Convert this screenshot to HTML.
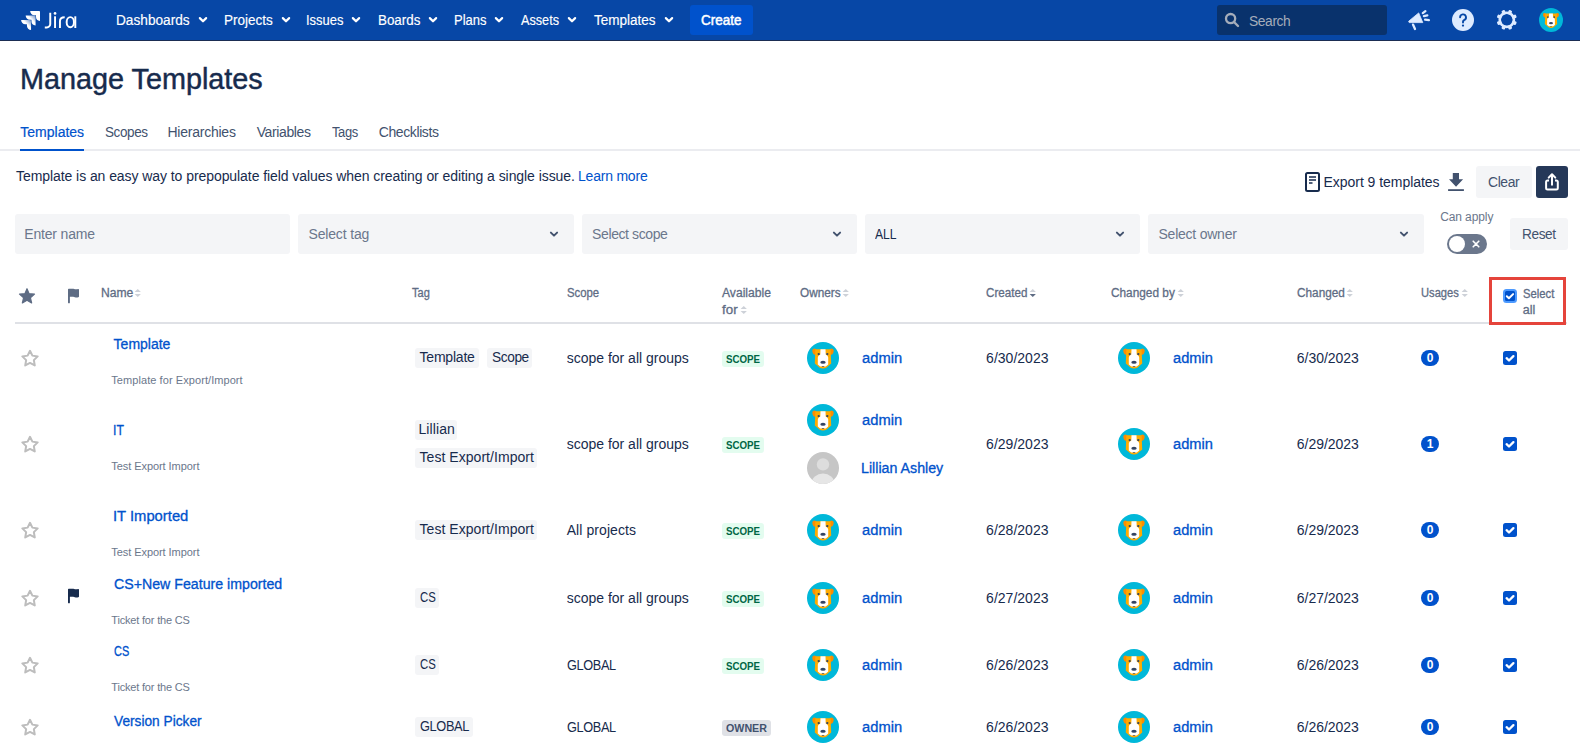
<!DOCTYPE html>
<html><head><meta charset="utf-8"><title>Manage Templates</title>
<style>
html,body{margin:0;padding:0;background:#fff;width:1580px;height:752px;overflow:hidden;position:relative;font-family:"Liberation Sans",sans-serif}
.b{position:absolute;box-sizing:border-box;display:block}
.t{position:absolute;white-space:nowrap;line-height:normal;transform-origin:0 0;font-family:"Liberation Sans",sans-serif}
</style></head><body>
<div class="b" style="left:0px;top:0px;width:1580px;height:40px;background:#0747A6;border-radius:0px;"></div>
<div class="b" style="left:0px;top:40px;width:1580px;height:1px;background:#1B2D52;border-radius:0px;"></div>
<div class="b" style="left:690px;top:5px;width:63px;height:30px;background:#0052CC;border-radius:3px;"></div>
<div class="b" style="left:1217px;top:5px;width:170px;height:30px;background:#09326C;border-radius:3px;"></div>
<div class="b" style="left:0px;top:149px;width:1580px;height:2px;background:#EBECF0;border-radius:0px;"></div>
<div class="b" style="left:20px;top:149px;width:64px;height:2px;background:#0052CC;border-radius:0px;"></div>
<div class="b" style="left:1476px;top:166px;width:56px;height:32px;background:#F4F5F7;border-radius:3px;"></div>
<div class="b" style="left:1536px;top:166px;width:32px;height:32px;background:#253858;border-radius:3px;"></div>
<div class="b" style="left:15px;top:214px;width:275px;height:40px;background:#F4F5F7;border-radius:3px;"></div>
<div class="b" style="left:298px;top:214px;width:276px;height:40px;background:#F4F5F7;border-radius:3px;"></div>
<div class="b" style="left:582px;top:214px;width:275px;height:40px;background:#F4F5F7;border-radius:3px;"></div>
<div class="b" style="left:865px;top:214px;width:275px;height:40px;background:#F4F5F7;border-radius:3px;"></div>
<div class="b" style="left:1148px;top:214px;width:276px;height:40px;background:#F4F5F7;border-radius:3px;"></div>
<div class="b" style="left:1447px;top:234px;width:40px;height:20px;background:#6B778C;border-radius:10px;"></div>
<div class="b" style="left:1449px;top:236px;width:16px;height:16px;background:#fff;border-radius:8px;"></div>
<div class="b" style="left:1510px;top:218px;width:58px;height:32px;background:#F4F5F7;border-radius:3px;"></div>
<div class="b" style="left:15px;top:322px;width:1552px;height:2px;background:#DFE1E6;border-radius:0px;"></div>
<div class="b" style="left:415px;top:348px;width:64px;height:20px;background:#F4F5F7;border-radius:3px;"></div>
<div class="b" style="left:487.1px;top:348px;width:45px;height:20px;background:#F4F5F7;border-radius:3px;"></div>
<div class="b" style="left:722px;top:351px;width:42px;height:16px;background:#E3FCEF;border-radius:3px;"></div>
<div class="b" style="left:1421px;top:350px;width:18px;height:16px;background:#0052CC;border-radius:8px;"></div>
<div class="b" style="left:415px;top:420px;width:42px;height:20px;background:#F4F5F7;border-radius:3px;"></div>
<div class="b" style="left:415px;top:448px;width:122px;height:20px;background:#F4F5F7;border-radius:3px;"></div>
<div class="b" style="left:722px;top:437px;width:42px;height:16px;background:#E3FCEF;border-radius:3px;"></div>
<svg class="b" style="left:807px;top:452px" width="32" height="32" viewBox="0 0 32 32"><defs><clipPath id="cp"><circle cx="16" cy="16" r="16"/></clipPath></defs><g clip-path="url(#cp)"><rect width="32" height="32" fill="#C6C6C6"/><circle cx="16" cy="12.4" r="6.2" fill="#DDDDDD"/><ellipse cx="16" cy="31.5" rx="11.5" ry="10" fill="#E6E6E6"/></g></svg>
<div class="b" style="left:1421px;top:436px;width:18px;height:16px;background:#0052CC;border-radius:8px;"></div>
<div class="b" style="left:415px;top:520px;width:122px;height:20px;background:#F4F5F7;border-radius:3px;"></div>
<div class="b" style="left:722px;top:523px;width:42px;height:16px;background:#E3FCEF;border-radius:3px;"></div>
<div class="b" style="left:1421px;top:522px;width:18px;height:16px;background:#0052CC;border-radius:8px;"></div>
<div class="b" style="left:415px;top:588px;width:24px;height:20px;background:#F4F5F7;border-radius:3px;"></div>
<div class="b" style="left:722px;top:591px;width:42px;height:16px;background:#E3FCEF;border-radius:3px;"></div>
<div class="b" style="left:1421px;top:590px;width:18px;height:16px;background:#0052CC;border-radius:8px;"></div>
<div class="b" style="left:415px;top:655px;width:24px;height:20px;background:#F4F5F7;border-radius:3px;"></div>
<div class="b" style="left:722px;top:658px;width:42px;height:16px;background:#E3FCEF;border-radius:3px;"></div>
<div class="b" style="left:1421px;top:657px;width:18px;height:16px;background:#0052CC;border-radius:8px;"></div>
<div class="b" style="left:415px;top:717px;width:58px;height:20px;background:#F4F5F7;border-radius:3px;"></div>
<div class="b" style="left:722px;top:720px;width:49px;height:16px;background:#DFE1E6;border-radius:3px;"></div>
<div class="b" style="left:1421px;top:719px;width:18px;height:16px;background:#0052CC;border-radius:8px;"></div>
<svg class="b" style="left:21px;top:11px" width="19" height="19" viewBox="0 0 19 19"><defs>
<linearGradient id="jg1" x1="98%" y1="0%" x2="58%" y2="40%"><stop offset="0" stop-color="#fff" stop-opacity=".4"/><stop offset="1" stop-color="#fff"/></linearGradient>
</defs>
<g transform="scale(0.826)">
<path fill="#fff" d="M22.16 0H11.11a5 5 0 0 0 5 5h2.03v1.97a5 5 0 0 0 5 4.99V1.84A1.84 1.84 0 0 0 22.16 0z"/>
<path fill="url(#jg1)" d="M16.68 5.5H5.63a5 5 0 0 0 5 5h2.03v1.97a5 5 0 0 0 5 4.98V6.48a.98.98 0 0 0-.98-.98z"/>
<path fill="url(#jg1)" d="M11.19 11H.14a5 5 0 0 0 5 5h2.04v1.97A5 5 0 0 0 12.16 23V11.98a.98.98 0 0 0-.97-.98z"/>
</g></svg>
<svg class="b" style="left:44px;top:10px" width="34" height="20" viewBox="0 0 34 20"><g fill="none" stroke="#fff" stroke-width="1.95">
<path d="M6.25 2.8V13.9a3.5 3.5 0 0 1-3.5 3.5H0.8"/>
<path d="M11.05 6.3V18"/>
<path d="M15.95 18V11.2Q15.95 7.25 20.7 7.25"/>
<ellipse cx="26.3" cy="12.2" rx="3.65" ry="5.1"/>
<path d="M31.3 6.3V18"/>
</g><circle cx="11.05" cy="3.4" r="1.35" fill="#fff"/></svg>
<svg class="b" style="left:198px;top:16px" width="10" height="8" viewBox="0 0 10 8"><path d="M1.85 2.1L5 5.25 8.15 2.1" fill="none" stroke="#fff" stroke-width="2.2" stroke-linecap="round" stroke-linejoin="round"/></svg>
<svg class="b" style="left:281px;top:16px" width="10" height="8" viewBox="0 0 10 8"><path d="M1.85 2.1L5 5.25 8.15 2.1" fill="none" stroke="#fff" stroke-width="2.2" stroke-linecap="round" stroke-linejoin="round"/></svg>
<svg class="b" style="left:351px;top:16px" width="10" height="8" viewBox="0 0 10 8"><path d="M1.85 2.1L5 5.25 8.15 2.1" fill="none" stroke="#fff" stroke-width="2.2" stroke-linecap="round" stroke-linejoin="round"/></svg>
<svg class="b" style="left:428px;top:16px" width="10" height="8" viewBox="0 0 10 8"><path d="M1.85 2.1L5 5.25 8.15 2.1" fill="none" stroke="#fff" stroke-width="2.2" stroke-linecap="round" stroke-linejoin="round"/></svg>
<svg class="b" style="left:494px;top:16px" width="10" height="8" viewBox="0 0 10 8"><path d="M1.85 2.1L5 5.25 8.15 2.1" fill="none" stroke="#fff" stroke-width="2.2" stroke-linecap="round" stroke-linejoin="round"/></svg>
<svg class="b" style="left:567px;top:16px" width="10" height="8" viewBox="0 0 10 8"><path d="M1.85 2.1L5 5.25 8.15 2.1" fill="none" stroke="#fff" stroke-width="2.2" stroke-linecap="round" stroke-linejoin="round"/></svg>
<svg class="b" style="left:664px;top:16px" width="10" height="8" viewBox="0 0 10 8"><path d="M1.85 2.1L5 5.25 8.15 2.1" fill="none" stroke="#fff" stroke-width="2.2" stroke-linecap="round" stroke-linejoin="round"/></svg>
<svg class="b" style="left:1224px;top:12px" width="16" height="16" viewBox="0 0 16 16"><circle cx="6.6" cy="6.6" r="4.6" fill="none" stroke="#A5ADBA" stroke-width="2.3"/><path d="M10 10l4 4" stroke="#A5ADBA" stroke-width="2.4" stroke-linecap="round"/></svg>
<svg class="b" style="left:1406px;top:8px" width="26" height="24" viewBox="0 0 26 24"><path fill="#DEEBFF" stroke="#DEEBFF" stroke-width=".8" stroke-linejoin="round" d="M2.6 13.3L12.7 4.9 16.8 14.6H3.2z"/>
<g stroke="#DEEBFF" stroke-width="2.3" stroke-linecap="round" fill="none">
<path d="M7 16.6l2 4.4"/><path d="M16.8 5.1l2.6-2"/><path d="M17.9 8.1l3.4-.8"/><path d="M19.1 11.7l3.8.4"/></g></svg>
<svg class="b" style="left:1452px;top:9px" width="22" height="22" viewBox="0 0 22 22"><circle cx="11" cy="11" r="11" fill="#DEEBFF"/><path d="M8.1 8.3a2.95 2.95 0 1 1 4 2.8c-.7.4-1.1.9-1.1 1.7v.8" fill="none" stroke="#0747A6" stroke-width="1.9" stroke-linecap="round"/><circle cx="11" cy="16.6" r="1.15" fill="#0747A6"/></svg>
<svg class="b" style="left:1496px;top:9px" width="22" height="22" viewBox="0 0 22 22"><g fill="#DEEBFF"><rect x="9" y="0.6" width="3.6" height="4.4" rx="1.1" transform="rotate(22.5 10.8 10.8)"/><rect x="9" y="0.6" width="3.6" height="4.4" rx="1.1" transform="rotate(67.5 10.8 10.8)"/><rect x="9" y="0.6" width="3.6" height="4.4" rx="1.1" transform="rotate(112.5 10.8 10.8)"/><rect x="9" y="0.6" width="3.6" height="4.4" rx="1.1" transform="rotate(157.5 10.8 10.8)"/><rect x="9" y="0.6" width="3.6" height="4.4" rx="1.1" transform="rotate(202.5 10.8 10.8)"/><rect x="9" y="0.6" width="3.6" height="4.4" rx="1.1" transform="rotate(247.5 10.8 10.8)"/><rect x="9" y="0.6" width="3.6" height="4.4" rx="1.1" transform="rotate(292.5 10.8 10.8)"/><rect x="9" y="0.6" width="3.6" height="4.4" rx="1.1" transform="rotate(337.5 10.8 10.8)"/></g><circle cx="10.8" cy="10.8" r="7.1" fill="none" stroke="#DEEBFF" stroke-width="2.6"/></svg>
<svg class="b" style="left:1539px;top:8px" width="24" height="24" viewBox="0 0 32 32"><circle cx="16" cy="16" r="16" fill="#00B8D9"/>
<ellipse cx="7.7" cy="9.7" rx="2.2" ry="3.1" transform="rotate(-18 7.7 9.7)" fill="#FF8B00"/>
<ellipse cx="24.3" cy="9.7" rx="2.2" ry="3.1" transform="rotate(18 24.3 9.7)" fill="#FF8B00"/>
<path fill="#FFAB00" d="M8.4 7.2H23.6L24.2 21.4 19.8 25.2Q16 28 12.2 25.2L7.8 21.4Z"/>
<path fill="#fff" d="M13.5 7.2H18.5L18.7 12.4Q21.1 13.6 21.2 15.4V22.6L18.8 24.4H13.2L10.8 22.6V15.4Q10.9 13.6 13.3 12.4Z"/>
<circle cx="11.7" cy="12.1" r="1.15" fill="#344563"/><circle cx="20.3" cy="12.1" r="1.15" fill="#344563"/>
<ellipse cx="16" cy="20.3" rx="2.7" ry="1.5" fill="#344563"/>
<path d="M14.5 23.9h3l-1.5 1.1z" fill="#344563"/></svg>
<svg class="b" style="left:1305px;top:172px" width="15" height="20" viewBox="0 0 15 20"><rect x="1" y="1" width="13" height="18" rx="1.5" fill="none" stroke="#172B4D" stroke-width="2"/><path d="M4 5h7M4 8h7M4 11h3.5" stroke="#172B4D" stroke-width="1.6"/></svg>
<svg class="b" style="left:1447px;top:172px" width="18" height="19" viewBox="0 0 18 19"><path fill="#42526E" d="M5.8 1.1h6.2v6.1h4.1L9.05 14.8 2 7.2h3.8z"/><rect x="1.1" y="17.2" width="15.8" height="1.8" fill="#42526E"/></svg>
<svg class="b" style="left:1542px;top:172px" width="20" height="20" viewBox="0 0 20 20"><path d="M7 8.5H5.6a1.5 1.5 0 0 0-1.5 1.5v6.1a1.5 1.5 0 0 0 1.5 1.5h8.7a1.5 1.5 0 0 0 1.5-1.5V10a1.5 1.5 0 0 0-1.5-1.5H13" fill="none" stroke="#fff" stroke-width="2"/><path d="M10 13.6V2.6" stroke="#fff" stroke-width="2"/><path d="M6.7 5.6L10 2.2l3.3 3.4" fill="none" stroke="#fff" stroke-width="2" stroke-linecap="round" stroke-linejoin="round"/></svg>
<svg class="b" style="left:549px;top:229px" width="10" height="10" viewBox="0 0 10 10"><path d="M1.9 3.6L5 6.6 8.1 3.6" fill="none" stroke="#42526E" stroke-width="2" stroke-linecap="round" stroke-linejoin="round"/></svg>
<svg class="b" style="left:832px;top:229px" width="10" height="10" viewBox="0 0 10 10"><path d="M1.9 3.6L5 6.6 8.1 3.6" fill="none" stroke="#42526E" stroke-width="2" stroke-linecap="round" stroke-linejoin="round"/></svg>
<svg class="b" style="left:1115px;top:229px" width="10" height="10" viewBox="0 0 10 10"><path d="M1.9 3.6L5 6.6 8.1 3.6" fill="none" stroke="#42526E" stroke-width="2" stroke-linecap="round" stroke-linejoin="round"/></svg>
<svg class="b" style="left:1399px;top:229px" width="10" height="10" viewBox="0 0 10 10"><path d="M1.9 3.6L5 6.6 8.1 3.6" fill="none" stroke="#42526E" stroke-width="2" stroke-linecap="round" stroke-linejoin="round"/></svg>
<svg class="b" style="left:1472px;top:240px" width="8" height="8" viewBox="0 0 8 8"><path d="M1.2 1.2l5.6 5.6M6.8 1.2L1.2 6.8" stroke="#fff" stroke-width="1.6" stroke-linecap="round"/></svg>
<svg class="b" style="left:17px;top:286px" width="20" height="20" viewBox="0 0 20 20"><path fill="#5E6C84" stroke="#5E6C84" stroke-width="1.2" stroke-linejoin="round" d="M10.00 2.70 L12.09 7.72 L17.51 8.16 L13.38 11.70 L14.64 16.99 L10.00 14.15 L5.36 16.99 L6.62 11.70 L2.49 8.16 L7.91 7.72Z"/></svg>
<svg class="b" style="left:67px;top:288px" width="14" height="16" viewBox="0 0 14 16"><path fill="#5E6C84" d="M1 1.4c0-.4.3-.7.7-.7h3.8c1.4 0 2.2.5 3.3.5 1 0 1.6-.3 2.4-.3.4 0 .8.3.8.7v6.9c0 .4-.3.7-.7.7-.9.2-1.7.3-2.6.2-1.2-.2-2.1-.6-3.5-.6H2.9v5.6a.95.95 0 0 1-1.9 0z"/></svg>
<svg class="b" style="left:134px;top:288px" width="8" height="10" viewBox="0 0 8 10"><path d="M0.6 4.1L3.75 0.9 6.9 4.1z" fill="#CDD1D8"/><path d="M0.6 6L3.75 9.1 6.9 6z" fill="#CDD1D8"/></svg>
<svg class="b" style="left:842px;top:288px" width="8" height="10" viewBox="0 0 8 10"><path d="M0.6 4.1L3.75 0.9 6.9 4.1z" fill="#CDD1D8"/><path d="M0.6 6L3.75 9.1 6.9 6z" fill="#CDD1D8"/></svg>
<svg class="b" style="left:1029px;top:288px" width="8" height="10" viewBox="0 0 8 10"><path d="M0.6 4.1L3.75 0.9 6.9 4.1z" fill="#CDD1D8"/><path d="M0.6 6L3.75 9.1 6.9 6z" fill="#5E6C84"/></svg>
<svg class="b" style="left:1177px;top:288px" width="8" height="10" viewBox="0 0 8 10"><path d="M0.6 4.1L3.75 0.9 6.9 4.1z" fill="#CDD1D8"/><path d="M0.6 6L3.75 9.1 6.9 6z" fill="#CDD1D8"/></svg>
<svg class="b" style="left:1346px;top:288px" width="8" height="10" viewBox="0 0 8 10"><path d="M0.6 4.1L3.75 0.9 6.9 4.1z" fill="#CDD1D8"/><path d="M0.6 6L3.75 9.1 6.9 6z" fill="#CDD1D8"/></svg>
<svg class="b" style="left:1461px;top:288px" width="8" height="10" viewBox="0 0 8 10"><path d="M0.6 4.1L3.75 0.9 6.9 4.1z" fill="#CDD1D8"/><path d="M0.6 6L3.75 9.1 6.9 6z" fill="#CDD1D8"/></svg>
<svg class="b" style="left:740px;top:305px" width="8" height="10" viewBox="0 0 8 10"><path d="M0.6 4.1L3.75 0.9 6.9 4.1z" fill="#CDD1D8"/><path d="M0.6 6L3.75 9.1 6.9 6z" fill="#CDD1D8"/></svg>
<div class="b" style="left:1489px;top:277px;width:77px;height:48px;border:3px solid #E5443B"></div>
<svg class="b" style="left:1503px;top:289px" width="14" height="14" viewBox="0 0 14 14"><rect x="1" y="1" width="12" height="12" rx="2.5" fill="#0052CC" stroke="#4C9AFF" stroke-width="2"/><path d="M3.8 7.3l2.1 2 4.2-4.2" fill="none" stroke="#fff" stroke-width="2" stroke-linecap="round" stroke-linejoin="round"/></svg>
<svg class="b" style="left:20px;top:348px" width="20" height="20" viewBox="0 0 20 20"><path fill="none" stroke="#BDBDBD" stroke-width="2" stroke-linejoin="round" d="M10.00 2.80 L12.38 7.62 L17.70 8.40 L13.85 12.15 L14.76 17.45 L10.00 14.95 L5.24 17.45 L6.15 12.15 L2.30 8.40 L7.62 7.62Z"/></svg>
<svg class="b" style="left:807px;top:342px" width="32" height="32" viewBox="0 0 32 32"><circle cx="16" cy="16" r="16" fill="#00B8D9"/>
<ellipse cx="7.7" cy="9.7" rx="2.2" ry="3.1" transform="rotate(-18 7.7 9.7)" fill="#FF8B00"/>
<ellipse cx="24.3" cy="9.7" rx="2.2" ry="3.1" transform="rotate(18 24.3 9.7)" fill="#FF8B00"/>
<path fill="#FFAB00" d="M8.4 7.2H23.6L24.2 21.4 19.8 25.2Q16 28 12.2 25.2L7.8 21.4Z"/>
<path fill="#fff" d="M13.5 7.2H18.5L18.7 12.4Q21.1 13.6 21.2 15.4V22.6L18.8 24.4H13.2L10.8 22.6V15.4Q10.9 13.6 13.3 12.4Z"/>
<circle cx="11.7" cy="12.1" r="1.15" fill="#344563"/><circle cx="20.3" cy="12.1" r="1.15" fill="#344563"/>
<ellipse cx="16" cy="20.3" rx="2.7" ry="1.5" fill="#344563"/>
<path d="M14.5 23.9h3l-1.5 1.1z" fill="#344563"/></svg>
<svg class="b" style="left:1118px;top:342px" width="32" height="32" viewBox="0 0 32 32"><circle cx="16" cy="16" r="16" fill="#00B8D9"/>
<ellipse cx="7.7" cy="9.7" rx="2.2" ry="3.1" transform="rotate(-18 7.7 9.7)" fill="#FF8B00"/>
<ellipse cx="24.3" cy="9.7" rx="2.2" ry="3.1" transform="rotate(18 24.3 9.7)" fill="#FF8B00"/>
<path fill="#FFAB00" d="M8.4 7.2H23.6L24.2 21.4 19.8 25.2Q16 28 12.2 25.2L7.8 21.4Z"/>
<path fill="#fff" d="M13.5 7.2H18.5L18.7 12.4Q21.1 13.6 21.2 15.4V22.6L18.8 24.4H13.2L10.8 22.6V15.4Q10.9 13.6 13.3 12.4Z"/>
<circle cx="11.7" cy="12.1" r="1.15" fill="#344563"/><circle cx="20.3" cy="12.1" r="1.15" fill="#344563"/>
<ellipse cx="16" cy="20.3" rx="2.7" ry="1.5" fill="#344563"/>
<path d="M14.5 23.9h3l-1.5 1.1z" fill="#344563"/></svg>
<svg class="b" style="left:1503px;top:351px" width="14" height="14" viewBox="0 0 14 14"><rect width="14" height="14" rx="2.5" fill="#0052CC"/><path d="M3.6 7.2l2.4 2.3 4.4-4.4" fill="none" stroke="#fff" stroke-width="2.3" stroke-linecap="round" stroke-linejoin="round"/></svg>
<svg class="b" style="left:20px;top:434px" width="20" height="20" viewBox="0 0 20 20"><path fill="none" stroke="#BDBDBD" stroke-width="2" stroke-linejoin="round" d="M10.00 2.80 L12.38 7.62 L17.70 8.40 L13.85 12.15 L14.76 17.45 L10.00 14.95 L5.24 17.45 L6.15 12.15 L2.30 8.40 L7.62 7.62Z"/></svg>
<svg class="b" style="left:807px;top:404px" width="32" height="32" viewBox="0 0 32 32"><circle cx="16" cy="16" r="16" fill="#00B8D9"/>
<ellipse cx="7.7" cy="9.7" rx="2.2" ry="3.1" transform="rotate(-18 7.7 9.7)" fill="#FF8B00"/>
<ellipse cx="24.3" cy="9.7" rx="2.2" ry="3.1" transform="rotate(18 24.3 9.7)" fill="#FF8B00"/>
<path fill="#FFAB00" d="M8.4 7.2H23.6L24.2 21.4 19.8 25.2Q16 28 12.2 25.2L7.8 21.4Z"/>
<path fill="#fff" d="M13.5 7.2H18.5L18.7 12.4Q21.1 13.6 21.2 15.4V22.6L18.8 24.4H13.2L10.8 22.6V15.4Q10.9 13.6 13.3 12.4Z"/>
<circle cx="11.7" cy="12.1" r="1.15" fill="#344563"/><circle cx="20.3" cy="12.1" r="1.15" fill="#344563"/>
<ellipse cx="16" cy="20.3" rx="2.7" ry="1.5" fill="#344563"/>
<path d="M14.5 23.9h3l-1.5 1.1z" fill="#344563"/></svg>
<svg class="b" style="left:1118px;top:428px" width="32" height="32" viewBox="0 0 32 32"><circle cx="16" cy="16" r="16" fill="#00B8D9"/>
<ellipse cx="7.7" cy="9.7" rx="2.2" ry="3.1" transform="rotate(-18 7.7 9.7)" fill="#FF8B00"/>
<ellipse cx="24.3" cy="9.7" rx="2.2" ry="3.1" transform="rotate(18 24.3 9.7)" fill="#FF8B00"/>
<path fill="#FFAB00" d="M8.4 7.2H23.6L24.2 21.4 19.8 25.2Q16 28 12.2 25.2L7.8 21.4Z"/>
<path fill="#fff" d="M13.5 7.2H18.5L18.7 12.4Q21.1 13.6 21.2 15.4V22.6L18.8 24.4H13.2L10.8 22.6V15.4Q10.9 13.6 13.3 12.4Z"/>
<circle cx="11.7" cy="12.1" r="1.15" fill="#344563"/><circle cx="20.3" cy="12.1" r="1.15" fill="#344563"/>
<ellipse cx="16" cy="20.3" rx="2.7" ry="1.5" fill="#344563"/>
<path d="M14.5 23.9h3l-1.5 1.1z" fill="#344563"/></svg>
<svg class="b" style="left:1503px;top:437px" width="14" height="14" viewBox="0 0 14 14"><rect width="14" height="14" rx="2.5" fill="#0052CC"/><path d="M3.6 7.2l2.4 2.3 4.4-4.4" fill="none" stroke="#fff" stroke-width="2.3" stroke-linecap="round" stroke-linejoin="round"/></svg>
<svg class="b" style="left:20px;top:520px" width="20" height="20" viewBox="0 0 20 20"><path fill="none" stroke="#BDBDBD" stroke-width="2" stroke-linejoin="round" d="M10.00 2.80 L12.38 7.62 L17.70 8.40 L13.85 12.15 L14.76 17.45 L10.00 14.95 L5.24 17.45 L6.15 12.15 L2.30 8.40 L7.62 7.62Z"/></svg>
<svg class="b" style="left:807px;top:514px" width="32" height="32" viewBox="0 0 32 32"><circle cx="16" cy="16" r="16" fill="#00B8D9"/>
<ellipse cx="7.7" cy="9.7" rx="2.2" ry="3.1" transform="rotate(-18 7.7 9.7)" fill="#FF8B00"/>
<ellipse cx="24.3" cy="9.7" rx="2.2" ry="3.1" transform="rotate(18 24.3 9.7)" fill="#FF8B00"/>
<path fill="#FFAB00" d="M8.4 7.2H23.6L24.2 21.4 19.8 25.2Q16 28 12.2 25.2L7.8 21.4Z"/>
<path fill="#fff" d="M13.5 7.2H18.5L18.7 12.4Q21.1 13.6 21.2 15.4V22.6L18.8 24.4H13.2L10.8 22.6V15.4Q10.9 13.6 13.3 12.4Z"/>
<circle cx="11.7" cy="12.1" r="1.15" fill="#344563"/><circle cx="20.3" cy="12.1" r="1.15" fill="#344563"/>
<ellipse cx="16" cy="20.3" rx="2.7" ry="1.5" fill="#344563"/>
<path d="M14.5 23.9h3l-1.5 1.1z" fill="#344563"/></svg>
<svg class="b" style="left:1118px;top:514px" width="32" height="32" viewBox="0 0 32 32"><circle cx="16" cy="16" r="16" fill="#00B8D9"/>
<ellipse cx="7.7" cy="9.7" rx="2.2" ry="3.1" transform="rotate(-18 7.7 9.7)" fill="#FF8B00"/>
<ellipse cx="24.3" cy="9.7" rx="2.2" ry="3.1" transform="rotate(18 24.3 9.7)" fill="#FF8B00"/>
<path fill="#FFAB00" d="M8.4 7.2H23.6L24.2 21.4 19.8 25.2Q16 28 12.2 25.2L7.8 21.4Z"/>
<path fill="#fff" d="M13.5 7.2H18.5L18.7 12.4Q21.1 13.6 21.2 15.4V22.6L18.8 24.4H13.2L10.8 22.6V15.4Q10.9 13.6 13.3 12.4Z"/>
<circle cx="11.7" cy="12.1" r="1.15" fill="#344563"/><circle cx="20.3" cy="12.1" r="1.15" fill="#344563"/>
<ellipse cx="16" cy="20.3" rx="2.7" ry="1.5" fill="#344563"/>
<path d="M14.5 23.9h3l-1.5 1.1z" fill="#344563"/></svg>
<svg class="b" style="left:1503px;top:523px" width="14" height="14" viewBox="0 0 14 14"><rect width="14" height="14" rx="2.5" fill="#0052CC"/><path d="M3.6 7.2l2.4 2.3 4.4-4.4" fill="none" stroke="#fff" stroke-width="2.3" stroke-linecap="round" stroke-linejoin="round"/></svg>
<svg class="b" style="left:20px;top:588px" width="20" height="20" viewBox="0 0 20 20"><path fill="none" stroke="#BDBDBD" stroke-width="2" stroke-linejoin="round" d="M10.00 2.80 L12.38 7.62 L17.70 8.40 L13.85 12.15 L14.76 17.45 L10.00 14.95 L5.24 17.45 L6.15 12.15 L2.30 8.40 L7.62 7.62Z"/></svg>
<svg class="b" style="left:67px;top:588px" width="14" height="16" viewBox="0 0 14 16"><path fill="#172B4D" d="M1 1.4c0-.4.3-.7.7-.7h3.8c1.4 0 2.2.5 3.3.5 1 0 1.6-.3 2.4-.3.4 0 .8.3.8.7v6.9c0 .4-.3.7-.7.7-.9.2-1.7.3-2.6.2-1.2-.2-2.1-.6-3.5-.6H2.9v5.6a.95.95 0 0 1-1.9 0z"/></svg>
<svg class="b" style="left:807px;top:582px" width="32" height="32" viewBox="0 0 32 32"><circle cx="16" cy="16" r="16" fill="#00B8D9"/>
<ellipse cx="7.7" cy="9.7" rx="2.2" ry="3.1" transform="rotate(-18 7.7 9.7)" fill="#FF8B00"/>
<ellipse cx="24.3" cy="9.7" rx="2.2" ry="3.1" transform="rotate(18 24.3 9.7)" fill="#FF8B00"/>
<path fill="#FFAB00" d="M8.4 7.2H23.6L24.2 21.4 19.8 25.2Q16 28 12.2 25.2L7.8 21.4Z"/>
<path fill="#fff" d="M13.5 7.2H18.5L18.7 12.4Q21.1 13.6 21.2 15.4V22.6L18.8 24.4H13.2L10.8 22.6V15.4Q10.9 13.6 13.3 12.4Z"/>
<circle cx="11.7" cy="12.1" r="1.15" fill="#344563"/><circle cx="20.3" cy="12.1" r="1.15" fill="#344563"/>
<ellipse cx="16" cy="20.3" rx="2.7" ry="1.5" fill="#344563"/>
<path d="M14.5 23.9h3l-1.5 1.1z" fill="#344563"/></svg>
<svg class="b" style="left:1118px;top:582px" width="32" height="32" viewBox="0 0 32 32"><circle cx="16" cy="16" r="16" fill="#00B8D9"/>
<ellipse cx="7.7" cy="9.7" rx="2.2" ry="3.1" transform="rotate(-18 7.7 9.7)" fill="#FF8B00"/>
<ellipse cx="24.3" cy="9.7" rx="2.2" ry="3.1" transform="rotate(18 24.3 9.7)" fill="#FF8B00"/>
<path fill="#FFAB00" d="M8.4 7.2H23.6L24.2 21.4 19.8 25.2Q16 28 12.2 25.2L7.8 21.4Z"/>
<path fill="#fff" d="M13.5 7.2H18.5L18.7 12.4Q21.1 13.6 21.2 15.4V22.6L18.8 24.4H13.2L10.8 22.6V15.4Q10.9 13.6 13.3 12.4Z"/>
<circle cx="11.7" cy="12.1" r="1.15" fill="#344563"/><circle cx="20.3" cy="12.1" r="1.15" fill="#344563"/>
<ellipse cx="16" cy="20.3" rx="2.7" ry="1.5" fill="#344563"/>
<path d="M14.5 23.9h3l-1.5 1.1z" fill="#344563"/></svg>
<svg class="b" style="left:1503px;top:591px" width="14" height="14" viewBox="0 0 14 14"><rect width="14" height="14" rx="2.5" fill="#0052CC"/><path d="M3.6 7.2l2.4 2.3 4.4-4.4" fill="none" stroke="#fff" stroke-width="2.3" stroke-linecap="round" stroke-linejoin="round"/></svg>
<svg class="b" style="left:20px;top:655px" width="20" height="20" viewBox="0 0 20 20"><path fill="none" stroke="#BDBDBD" stroke-width="2" stroke-linejoin="round" d="M10.00 2.80 L12.38 7.62 L17.70 8.40 L13.85 12.15 L14.76 17.45 L10.00 14.95 L5.24 17.45 L6.15 12.15 L2.30 8.40 L7.62 7.62Z"/></svg>
<svg class="b" style="left:807px;top:649px" width="32" height="32" viewBox="0 0 32 32"><circle cx="16" cy="16" r="16" fill="#00B8D9"/>
<ellipse cx="7.7" cy="9.7" rx="2.2" ry="3.1" transform="rotate(-18 7.7 9.7)" fill="#FF8B00"/>
<ellipse cx="24.3" cy="9.7" rx="2.2" ry="3.1" transform="rotate(18 24.3 9.7)" fill="#FF8B00"/>
<path fill="#FFAB00" d="M8.4 7.2H23.6L24.2 21.4 19.8 25.2Q16 28 12.2 25.2L7.8 21.4Z"/>
<path fill="#fff" d="M13.5 7.2H18.5L18.7 12.4Q21.1 13.6 21.2 15.4V22.6L18.8 24.4H13.2L10.8 22.6V15.4Q10.9 13.6 13.3 12.4Z"/>
<circle cx="11.7" cy="12.1" r="1.15" fill="#344563"/><circle cx="20.3" cy="12.1" r="1.15" fill="#344563"/>
<ellipse cx="16" cy="20.3" rx="2.7" ry="1.5" fill="#344563"/>
<path d="M14.5 23.9h3l-1.5 1.1z" fill="#344563"/></svg>
<svg class="b" style="left:1118px;top:649px" width="32" height="32" viewBox="0 0 32 32"><circle cx="16" cy="16" r="16" fill="#00B8D9"/>
<ellipse cx="7.7" cy="9.7" rx="2.2" ry="3.1" transform="rotate(-18 7.7 9.7)" fill="#FF8B00"/>
<ellipse cx="24.3" cy="9.7" rx="2.2" ry="3.1" transform="rotate(18 24.3 9.7)" fill="#FF8B00"/>
<path fill="#FFAB00" d="M8.4 7.2H23.6L24.2 21.4 19.8 25.2Q16 28 12.2 25.2L7.8 21.4Z"/>
<path fill="#fff" d="M13.5 7.2H18.5L18.7 12.4Q21.1 13.6 21.2 15.4V22.6L18.8 24.4H13.2L10.8 22.6V15.4Q10.9 13.6 13.3 12.4Z"/>
<circle cx="11.7" cy="12.1" r="1.15" fill="#344563"/><circle cx="20.3" cy="12.1" r="1.15" fill="#344563"/>
<ellipse cx="16" cy="20.3" rx="2.7" ry="1.5" fill="#344563"/>
<path d="M14.5 23.9h3l-1.5 1.1z" fill="#344563"/></svg>
<svg class="b" style="left:1503px;top:658px" width="14" height="14" viewBox="0 0 14 14"><rect width="14" height="14" rx="2.5" fill="#0052CC"/><path d="M3.6 7.2l2.4 2.3 4.4-4.4" fill="none" stroke="#fff" stroke-width="2.3" stroke-linecap="round" stroke-linejoin="round"/></svg>
<svg class="b" style="left:20px;top:717px" width="20" height="20" viewBox="0 0 20 20"><path fill="none" stroke="#BDBDBD" stroke-width="2" stroke-linejoin="round" d="M10.00 2.80 L12.38 7.62 L17.70 8.40 L13.85 12.15 L14.76 17.45 L10.00 14.95 L5.24 17.45 L6.15 12.15 L2.30 8.40 L7.62 7.62Z"/></svg>
<svg class="b" style="left:807px;top:711px" width="32" height="32" viewBox="0 0 32 32"><circle cx="16" cy="16" r="16" fill="#00B8D9"/>
<ellipse cx="7.7" cy="9.7" rx="2.2" ry="3.1" transform="rotate(-18 7.7 9.7)" fill="#FF8B00"/>
<ellipse cx="24.3" cy="9.7" rx="2.2" ry="3.1" transform="rotate(18 24.3 9.7)" fill="#FF8B00"/>
<path fill="#FFAB00" d="M8.4 7.2H23.6L24.2 21.4 19.8 25.2Q16 28 12.2 25.2L7.8 21.4Z"/>
<path fill="#fff" d="M13.5 7.2H18.5L18.7 12.4Q21.1 13.6 21.2 15.4V22.6L18.8 24.4H13.2L10.8 22.6V15.4Q10.9 13.6 13.3 12.4Z"/>
<circle cx="11.7" cy="12.1" r="1.15" fill="#344563"/><circle cx="20.3" cy="12.1" r="1.15" fill="#344563"/>
<ellipse cx="16" cy="20.3" rx="2.7" ry="1.5" fill="#344563"/>
<path d="M14.5 23.9h3l-1.5 1.1z" fill="#344563"/></svg>
<svg class="b" style="left:1118px;top:711px" width="32" height="32" viewBox="0 0 32 32"><circle cx="16" cy="16" r="16" fill="#00B8D9"/>
<ellipse cx="7.7" cy="9.7" rx="2.2" ry="3.1" transform="rotate(-18 7.7 9.7)" fill="#FF8B00"/>
<ellipse cx="24.3" cy="9.7" rx="2.2" ry="3.1" transform="rotate(18 24.3 9.7)" fill="#FF8B00"/>
<path fill="#FFAB00" d="M8.4 7.2H23.6L24.2 21.4 19.8 25.2Q16 28 12.2 25.2L7.8 21.4Z"/>
<path fill="#fff" d="M13.5 7.2H18.5L18.7 12.4Q21.1 13.6 21.2 15.4V22.6L18.8 24.4H13.2L10.8 22.6V15.4Q10.9 13.6 13.3 12.4Z"/>
<circle cx="11.7" cy="12.1" r="1.15" fill="#344563"/><circle cx="20.3" cy="12.1" r="1.15" fill="#344563"/>
<ellipse cx="16" cy="20.3" rx="2.7" ry="1.5" fill="#344563"/>
<path d="M14.5 23.9h3l-1.5 1.1z" fill="#344563"/></svg>
<svg class="b" style="left:1503px;top:720px" width="14" height="14" viewBox="0 0 14 14"><rect width="14" height="14" rx="2.5" fill="#0052CC"/><path d="M3.6 7.2l2.4 2.3 4.4-4.4" fill="none" stroke="#fff" stroke-width="2.3" stroke-linecap="round" stroke-linejoin="round"/></svg>
<span class="t" style="left:116.32px;top:12.00px;font-size:14px;font-weight:400;color:#FFFFFF;transform:scaleX(0.9760);-webkit-text-stroke:0.15px #FFFFFF;">Dashboards</span>
<span class="t" style="left:224.04px;top:12.00px;font-size:14px;font-weight:400;color:#FFFFFF;transform:scaleX(0.9642);-webkit-text-stroke:0.15px #FFFFFF;">Projects</span>
<span class="t" style="left:306.38px;top:12.00px;font-size:14px;font-weight:400;color:#FFFFFF;transform:scaleX(0.9249);-webkit-text-stroke:0.15px #FFFFFF;">Issues</span>
<span class="t" style="left:377.65px;top:12.00px;font-size:14px;font-weight:400;color:#FFFFFF;transform:scaleX(0.9548);-webkit-text-stroke:0.15px #FFFFFF;">Boards</span>
<span class="t" style="left:454.27px;top:12.00px;font-size:14px;font-weight:400;color:#FFFFFF;transform:scaleX(0.9289);-webkit-text-stroke:0.15px #FFFFFF;">Plans</span>
<span class="t" style="left:521.30px;top:12.00px;font-size:14px;font-weight:400;color:#FFFFFF;transform:scaleX(0.9045);-webkit-text-stroke:0.15px #FFFFFF;">Assets</span>
<span class="t" style="left:594.00px;top:12.00px;font-size:14px;font-weight:400;color:#FFFFFF;transform:scaleX(0.9654);-webkit-text-stroke:0.15px #FFFFFF;">Templates</span>
<span class="t" style="left:701.20px;top:12.00px;font-size:14px;font-weight:400;color:#FFFFFF;transform:scaleX(0.9613);-webkit-text-stroke:0.5px #FFFFFF;">Create</span>
<span class="t" style="left:1249.00px;top:13.00px;font-size:14px;font-weight:400;color:#A5ADBA;transform:scaleX(0.9862);letter-spacing:-0.400px;">Search</span>
<span class="t" style="left:19.61px;top:62.70px;font-size:29px;font-weight:400;color:#172B4D;transform:scaleX(0.9929);-webkit-text-stroke:0.45px #172B4D;">Manage Templates</span>
<span class="t" style="left:20.30px;top:124.00px;font-size:14px;font-weight:400;color:#0052CC;-webkit-text-stroke:0.2px #0052CC;">Templates</span>
<span class="t" style="left:104.50px;top:124.00px;font-size:14px;font-weight:400;color:#42526E;transform:scaleX(0.9620);letter-spacing:-0.400px;">Scopes</span>
<span class="t" style="left:167.40px;top:124.00px;font-size:14px;font-weight:400;color:#42526E;letter-spacing:-0.230px;">Hierarchies</span>
<span class="t" style="left:256.70px;top:124.00px;font-size:14px;font-weight:400;color:#42526E;letter-spacing:-0.378px;">Variables</span>
<span class="t" style="left:331.90px;top:124.00px;font-size:14px;font-weight:400;color:#42526E;transform:scaleX(0.9270);letter-spacing:-0.400px;">Tags</span>
<span class="t" style="left:378.70px;top:124.00px;font-size:14px;font-weight:400;color:#42526E;letter-spacing:-0.388px;">Checklists</span>
<span class="t" style="left:16.00px;top:167.90px;font-size:14px;font-weight:400;color:#172B4D;letter-spacing:-0.067px;">Template is an easy way to prepopulate field values when creating or editing a single issue.</span>
<span class="t" style="left:578.00px;top:167.90px;font-size:14px;font-weight:400;color:#0052CC;letter-spacing:-0.212px;">Learn more</span>
<span class="t" style="left:1323.50px;top:174.00px;font-size:14px;font-weight:400;color:#172B4D;letter-spacing:-0.037px;">Export 9 templates</span>
<span class="t" style="left:1488.00px;top:174.00px;font-size:14px;font-weight:400;color:#42526E;transform:scaleX(0.9940);letter-spacing:-0.400px;">Clear</span>
<span class="t" style="left:24.30px;top:226.20px;font-size:14px;font-weight:400;color:#6B778C;letter-spacing:-0.187px;">Enter name</span>
<span class="t" style="left:308.50px;top:226.20px;font-size:14px;font-weight:400;color:#6B778C;letter-spacing:-0.164px;">Select tag</span>
<span class="t" style="left:592.10px;top:226.20px;font-size:14px;font-weight:400;color:#6B778C;letter-spacing:-0.400px;">Select scope</span>
<span class="t" style="left:875.20px;top:226.20px;font-size:14px;font-weight:400;color:#172B4D;transform:scaleX(0.8677);">ALL</span>
<span class="t" style="left:1158.50px;top:226.20px;font-size:14px;font-weight:400;color:#6B778C;letter-spacing:-0.234px;">Select owner</span>
<span class="t" style="left:1440.20px;top:210.00px;font-size:12px;font-weight:400;color:#6B778C;letter-spacing:-0.104px;">Can apply</span>
<span class="t" style="left:1521.63px;top:225.70px;font-size:14px;font-weight:400;color:#42526E;transform:scaleX(0.9741);letter-spacing:-0.400px;">Reset</span>
<span class="t" style="left:100.53px;top:286.00px;font-size:12.5px;font-weight:400;color:#5E6C84;transform:scaleX(0.9694);-webkit-text-stroke:0.3px #5E6C84;">Name</span>
<span class="t" style="left:411.80px;top:286.00px;font-size:12.5px;font-weight:400;color:#5E6C84;transform:scaleX(0.8811);-webkit-text-stroke:0.3px #5E6C84;">Tag</span>
<span class="t" style="left:566.80px;top:286.00px;font-size:12.5px;font-weight:400;color:#5E6C84;transform:scaleX(0.9073);-webkit-text-stroke:0.3px #5E6C84;">Scope</span>
<span class="t" style="left:722.00px;top:286.00px;font-size:12.5px;font-weight:400;color:#5E6C84;transform:scaleX(0.9694);-webkit-text-stroke:0.3px #5E6C84;">Available</span>
<span class="t" style="left:800.00px;top:286.00px;font-size:12.5px;font-weight:400;color:#5E6C84;transform:scaleX(0.9412);-webkit-text-stroke:0.3px #5E6C84;">Owners</span>
<span class="t" style="left:986.00px;top:286.00px;font-size:12.5px;font-weight:400;color:#5E6C84;transform:scaleX(0.9300);-webkit-text-stroke:0.3px #5E6C84;">Created</span>
<span class="t" style="left:1110.50px;top:286.00px;font-size:12.5px;font-weight:400;color:#5E6C84;transform:scaleX(0.9463);-webkit-text-stroke:0.3px #5E6C84;">Changed by</span>
<span class="t" style="left:1296.70px;top:286.00px;font-size:12.5px;font-weight:400;color:#5E6C84;transform:scaleX(0.9432);-webkit-text-stroke:0.3px #5E6C84;">Changed</span>
<span class="t" style="left:1421.40px;top:286.00px;font-size:12.5px;font-weight:400;color:#5E6C84;transform:scaleX(0.8924);-webkit-text-stroke:0.3px #5E6C84;">Usages</span>
<span class="t" style="left:722.00px;top:302.60px;font-size:12.5px;font-weight:400;color:#5E6C84;transform:scaleX(1.0676);-webkit-text-stroke:0.3px #5E6C84;">for</span>
<span class="t" style="left:1522.60px;top:286.50px;font-size:12.5px;font-weight:400;color:#5E6C84;transform:scaleX(0.9017);-webkit-text-stroke:0.3px #5E6C84;">Select</span>
<span class="t" style="left:1522.70px;top:302.70px;font-size:12.5px;font-weight:400;color:#5E6C84;-webkit-text-stroke:0.3px #5E6C84;">all</span>
<span class="t" style="left:113.60px;top:336.00px;font-size:14px;font-weight:400;color:#0052CC;-webkit-text-stroke:0.3px #0052CC;">Template</span>
<span class="t" style="left:111.30px;top:374.00px;font-size:11px;font-weight:400;color:#6B778C;letter-spacing:0.070px;">Template for Export/Import</span>
<span class="t" style="left:419.50px;top:349.10px;font-size:14px;font-weight:400;color:#172B4D;letter-spacing:-0.203px;">Template</span>
<span class="t" style="left:491.60px;top:349.10px;font-size:14px;font-weight:400;color:#172B4D;transform:scaleX(0.9762);letter-spacing:-0.400px;">Scope</span>
<span class="t" style="left:566.70px;top:349.70px;font-size:14px;font-weight:400;color:#172B4D;letter-spacing:-0.004px;">scope for all groups</span>
<span class="t" style="left:726.00px;top:352.70px;font-size:11px;font-weight:700;color:#006644;transform:scaleX(0.8854);">SCOPE</span>
<span class="t" style="left:861.90px;top:349.80px;font-size:14px;font-weight:400;color:#0052CC;transform:scaleX(1.0524);-webkit-text-stroke:0.3px #0052CC;">admin</span>
<span class="t" style="left:986.10px;top:349.80px;font-size:14px;font-weight:400;color:#172B4D;letter-spacing:0.013px;">6/30/2023</span>
<span class="t" style="left:1172.60px;top:349.80px;font-size:14px;font-weight:400;color:#0052CC;transform:scaleX(1.0470);-webkit-text-stroke:0.3px #0052CC;">admin</span>
<span class="t" style="left:1296.80px;top:349.80px;font-size:14px;font-weight:400;color:#172B4D;letter-spacing:-0.025px;">6/30/2023</span>
<span class="t" style="left:1426.80px;top:351.40px;font-size:12px;font-weight:700;color:#fff;">0</span>
<span class="t" style="left:112.73px;top:422.00px;font-size:14px;font-weight:400;color:#0052CC;transform:scaleX(0.8747);-webkit-text-stroke:0.3px #0052CC;">IT</span>
<span class="t" style="left:111.30px;top:460.00px;font-size:11px;font-weight:400;color:#6B778C;letter-spacing:-0.064px;">Test Export Import</span>
<span class="t" style="left:418.50px;top:421.10px;font-size:14px;font-weight:400;color:#172B4D;letter-spacing:0.081px;">Lillian</span>
<span class="t" style="left:419.50px;top:449.10px;font-size:14px;font-weight:400;color:#172B4D;letter-spacing:0.047px;">Test Export/Import</span>
<span class="t" style="left:566.70px;top:435.70px;font-size:14px;font-weight:400;color:#172B4D;letter-spacing:-0.004px;">scope for all groups</span>
<span class="t" style="left:726.00px;top:438.70px;font-size:11px;font-weight:700;color:#006644;transform:scaleX(0.8854);">SCOPE</span>
<span class="t" style="left:861.90px;top:411.80px;font-size:14px;font-weight:400;color:#0052CC;transform:scaleX(1.0524);-webkit-text-stroke:0.3px #0052CC;">admin</span>
<span class="t" style="left:860.98px;top:460.00px;font-size:14px;font-weight:400;color:#0052CC;transform:scaleX(1.0160);-webkit-text-stroke:0.3px #0052CC;">Lillian Ashley</span>
<span class="t" style="left:986.10px;top:435.80px;font-size:14px;font-weight:400;color:#172B4D;letter-spacing:0.013px;">6/29/2023</span>
<span class="t" style="left:1172.60px;top:435.80px;font-size:14px;font-weight:400;color:#0052CC;transform:scaleX(1.0470);-webkit-text-stroke:0.3px #0052CC;">admin</span>
<span class="t" style="left:1296.80px;top:435.80px;font-size:14px;font-weight:400;color:#172B4D;letter-spacing:-0.025px;">6/29/2023</span>
<span class="t" style="left:1426.80px;top:437.40px;font-size:12px;font-weight:700;color:#fff;">1</span>
<span class="t" style="left:112.54px;top:508.00px;font-size:14px;font-weight:400;color:#0052CC;transform:scaleX(1.0560);-webkit-text-stroke:0.3px #0052CC;">IT Imported</span>
<span class="t" style="left:111.30px;top:546.00px;font-size:11px;font-weight:400;color:#6B778C;letter-spacing:-0.064px;">Test Export Import</span>
<span class="t" style="left:419.50px;top:521.10px;font-size:14px;font-weight:400;color:#172B4D;letter-spacing:0.047px;">Test Export/Import</span>
<span class="t" style="left:566.70px;top:521.70px;font-size:14px;font-weight:400;color:#172B4D;letter-spacing:0.076px;">All projects</span>
<span class="t" style="left:726.00px;top:524.70px;font-size:11px;font-weight:700;color:#006644;transform:scaleX(0.8854);">SCOPE</span>
<span class="t" style="left:861.90px;top:521.80px;font-size:14px;font-weight:400;color:#0052CC;transform:scaleX(1.0524);-webkit-text-stroke:0.3px #0052CC;">admin</span>
<span class="t" style="left:986.10px;top:521.80px;font-size:14px;font-weight:400;color:#172B4D;letter-spacing:0.013px;">6/28/2023</span>
<span class="t" style="left:1172.60px;top:521.80px;font-size:14px;font-weight:400;color:#0052CC;transform:scaleX(1.0470);-webkit-text-stroke:0.3px #0052CC;">admin</span>
<span class="t" style="left:1296.80px;top:521.80px;font-size:14px;font-weight:400;color:#172B4D;letter-spacing:-0.025px;">6/29/2023</span>
<span class="t" style="left:1426.80px;top:523.40px;font-size:12px;font-weight:700;color:#fff;">0</span>
<span class="t" style="left:113.60px;top:576.00px;font-size:14px;font-weight:400;color:#0052CC;transform:scaleX(1.0125);-webkit-text-stroke:0.3px #0052CC;">CS+New Feature imported</span>
<span class="t" style="left:111.30px;top:614.00px;font-size:11px;font-weight:400;color:#6B778C;letter-spacing:-0.186px;">Ticket for the CS</span>
<span class="t" style="left:419.50px;top:589.10px;font-size:14px;font-weight:400;color:#172B4D;transform:scaleX(0.8111);">CS</span>
<span class="t" style="left:566.70px;top:589.70px;font-size:14px;font-weight:400;color:#172B4D;letter-spacing:-0.004px;">scope for all groups</span>
<span class="t" style="left:726.00px;top:592.70px;font-size:11px;font-weight:700;color:#006644;transform:scaleX(0.8854);">SCOPE</span>
<span class="t" style="left:861.90px;top:589.80px;font-size:14px;font-weight:400;color:#0052CC;transform:scaleX(1.0524);-webkit-text-stroke:0.3px #0052CC;">admin</span>
<span class="t" style="left:986.10px;top:589.80px;font-size:14px;font-weight:400;color:#172B4D;letter-spacing:0.013px;">6/27/2023</span>
<span class="t" style="left:1172.60px;top:589.80px;font-size:14px;font-weight:400;color:#0052CC;transform:scaleX(1.0470);-webkit-text-stroke:0.3px #0052CC;">admin</span>
<span class="t" style="left:1296.80px;top:589.80px;font-size:14px;font-weight:400;color:#172B4D;letter-spacing:-0.025px;">6/27/2023</span>
<span class="t" style="left:1426.80px;top:591.40px;font-size:12px;font-weight:700;color:#fff;">0</span>
<span class="t" style="left:113.60px;top:643.00px;font-size:14px;font-weight:400;color:#0052CC;transform:scaleX(0.7797);-webkit-text-stroke:0.3px #0052CC;">CS</span>
<span class="t" style="left:111.30px;top:681.00px;font-size:11px;font-weight:400;color:#6B778C;letter-spacing:-0.186px;">Ticket for the CS</span>
<span class="t" style="left:419.50px;top:656.10px;font-size:14px;font-weight:400;color:#172B4D;transform:scaleX(0.8111);">CS</span>
<span class="t" style="left:566.70px;top:656.70px;font-size:14px;font-weight:400;color:#172B4D;transform:scaleX(0.9089);letter-spacing:-0.400px;">GLOBAL</span>
<span class="t" style="left:726.00px;top:659.70px;font-size:11px;font-weight:700;color:#006644;transform:scaleX(0.8854);">SCOPE</span>
<span class="t" style="left:861.90px;top:656.80px;font-size:14px;font-weight:400;color:#0052CC;transform:scaleX(1.0524);-webkit-text-stroke:0.3px #0052CC;">admin</span>
<span class="t" style="left:986.10px;top:656.80px;font-size:14px;font-weight:400;color:#172B4D;letter-spacing:0.013px;">6/26/2023</span>
<span class="t" style="left:1172.60px;top:656.80px;font-size:14px;font-weight:400;color:#0052CC;transform:scaleX(1.0470);-webkit-text-stroke:0.3px #0052CC;">admin</span>
<span class="t" style="left:1296.80px;top:656.80px;font-size:14px;font-weight:400;color:#172B4D;letter-spacing:-0.025px;">6/26/2023</span>
<span class="t" style="left:1426.80px;top:658.40px;font-size:12px;font-weight:700;color:#fff;">0</span>
<span class="t" style="left:113.60px;top:713.00px;font-size:14px;font-weight:400;color:#0052CC;transform:scaleX(0.9786);-webkit-text-stroke:0.3px #0052CC;">Version Picker</span>
<span class="t" style="left:419.50px;top:718.10px;font-size:14px;font-weight:400;color:#172B4D;transform:scaleX(0.9126);letter-spacing:-0.400px;">GLOBAL</span>
<span class="t" style="left:566.70px;top:718.70px;font-size:14px;font-weight:400;color:#172B4D;transform:scaleX(0.9089);letter-spacing:-0.400px;">GLOBAL</span>
<span class="t" style="left:726.00px;top:721.70px;font-size:11px;font-weight:700;color:#42526E;transform:scaleX(0.9711);">OWNER</span>
<span class="t" style="left:861.90px;top:718.80px;font-size:14px;font-weight:400;color:#0052CC;transform:scaleX(1.0524);-webkit-text-stroke:0.3px #0052CC;">admin</span>
<span class="t" style="left:986.10px;top:718.80px;font-size:14px;font-weight:400;color:#172B4D;letter-spacing:0.013px;">6/26/2023</span>
<span class="t" style="left:1172.60px;top:718.80px;font-size:14px;font-weight:400;color:#0052CC;transform:scaleX(1.0470);-webkit-text-stroke:0.3px #0052CC;">admin</span>
<span class="t" style="left:1296.80px;top:718.80px;font-size:14px;font-weight:400;color:#172B4D;letter-spacing:-0.025px;">6/26/2023</span>
<span class="t" style="left:1426.80px;top:720.40px;font-size:12px;font-weight:700;color:#fff;">0</span>
</body></html>
